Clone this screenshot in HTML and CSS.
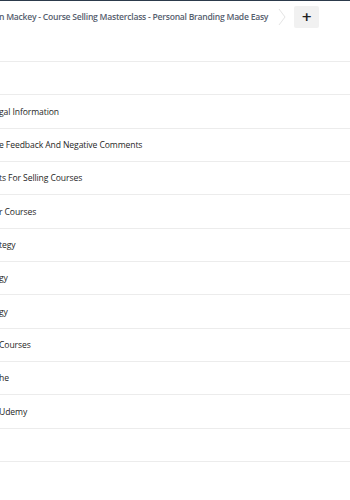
FILE: index.html
```html
<!DOCTYPE html>
<html lang="en">
  <head>
    <meta charset="UTF-8" />
    <meta name="viewport" content="width=device-width, initial-scale=1.0" />
    <title>Course Selling Masterclass</title>
    <link rel="stylesheet" href="styles.css">
  </head>
  <body>
    <div class="topbar">
      <div class="crumbs">
        <span class="crumb">n Mackey - Course Selling Masterclass - Personal Branding Made Easy</span>
        <svg class="chevron" width="8" height="18" viewBox="0 0 8 18">
          <path d="M1 1 L7 9 L1 17" fill="none" stroke="#e4e4e4" stroke-width="1" />
        </svg>
      </div>
      <button class="add-btn">+</button>
    </div>

    <ul class="list">
      <li class="row"></li>
      <li class="row"><span class="cut">gal Information</span></li>
      <li class="row"><span class="cut">e Feedback And Negative Comments</span></li>
      <li class="row"><span class="cut">ts For Selling Courses</span></li>
      <li class="row"><span class="cut">r Courses</span></li>
      <li class="row"><span class="cut">tegy</span></li>
      <li class="row"><span class="cut">gy</span></li>
      <li class="row"><span class="cut">gy</span></li>
      <li class="row"><span class="cut">Courses</span></li>
      <li class="row"><span class="cut">he</span></li>
      <li class="row"><span class="cut">Udemy</span></li>
      <li class="row"></li>
    </ul>
  </body>
</html>
```

FILE: styles.css
```css
/* Page */
body {
  margin: 0;
  font-family: "Open Sans", Arial, sans-serif;
  background-color: #fff;
  border-top: 1px solid #2c3a4b;
  overflow: hidden;
}

/* Breadcrumb bar */
.topbar {
  display: flex;
  align-items: center;
  height: 29px;
  padding-top: 1px;
}

.crumbs {
  display: flex;
  align-items: center;
  gap: 10px;
  margin-left: -1px;
}

.crumb {
  font-size: 8.6px;
  font-weight: 600;
  letter-spacing: -0.25px;
  color: #56606e;
  white-space: nowrap;
}

.chevron {
  display: block;
}

.add-btn {
  margin-left: 8px;
  width: 25px;
  height: 22px;
  border: none;
  border-radius: 2px;
  background-color: #f1f1f1;
  color: #222;
  font-family: "DejaVu Sans", sans-serif;
  font-size: 13px;
  font-weight: bold;
  line-height: 22px;
  padding: 0;
}

/* Rows */
.list {
  list-style: none;
  margin: 30px 0 0;
  padding: 0;
  border-top: 1px solid #ececec;
}

.row {
  height: 32.35px;
  border-bottom: 1px solid #ececec;
  display: flex;
  align-items: center;
  font-size: 8.6px;
  letter-spacing: -0.1px;
  color: #262626;
  white-space: nowrap;
}

.cut {
  margin-left: -1px;
}
```
